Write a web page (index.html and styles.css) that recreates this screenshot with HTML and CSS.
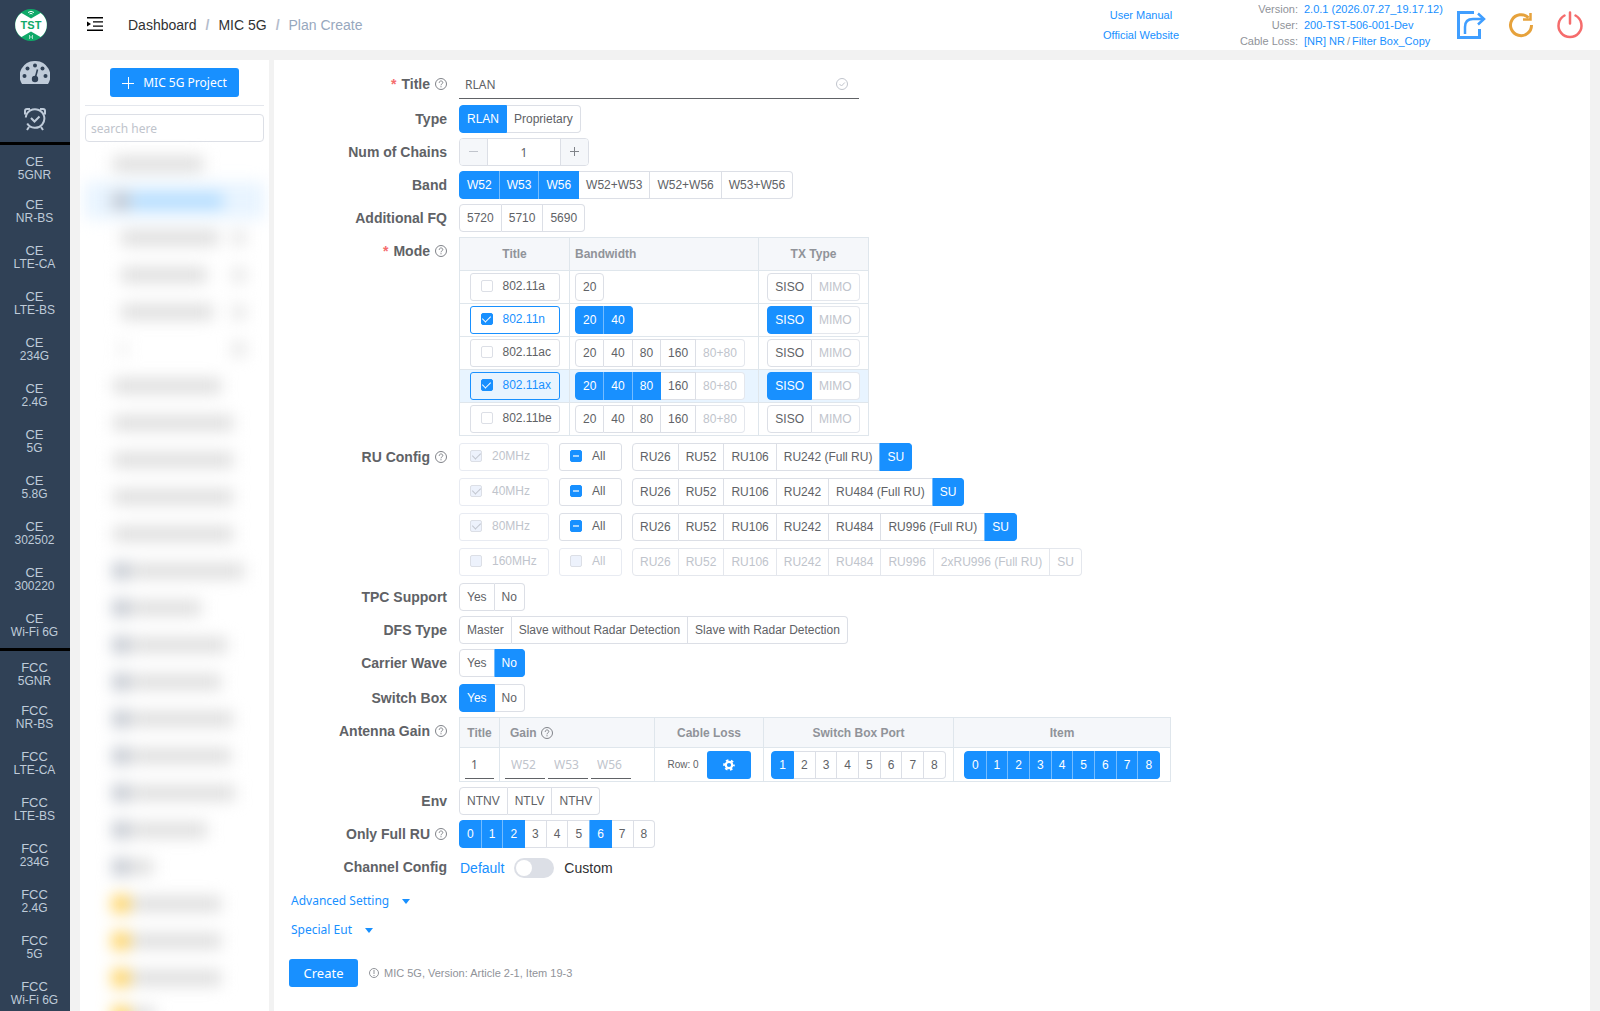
FILE: index.html
```html
<!DOCTYPE html>
<html lang="en">
<head>
  <meta charset="UTF-8" />
  <meta name="viewport" content="width=device-width, initial-scale=1.0" />
  <title>MIC 5G - Plan Create</title>
  <link rel="stylesheet" href="styles.css">
</head>
<body>
  <!-- shared icons -->
  <svg class="sprite" aria-hidden="true">
    <symbol id="question" viewBox="0 0 12 12">
      <circle cx="6" cy="6" r="5.500" fill="none" />
      <path d="M4.200 4.800C4.200 2.400 7.800 2.400 7.800 4.600C7.800 5.800 6 5.800 6 7.300M6 8.200V9.300" fill="none" />
    </symbol>
  </svg>

  <nav class="sidebar">
    <div class="sidebar-top">
      <a href="#" class="logo" aria-label="TST">
        <svg viewBox="0 0 32 32" width="32" height="32">
          <circle cx="16" cy="16" r="16" fill="#0fa968" />
          <path d="M1 11Q3 6 6.500 4L16 9.500L25.500 4Q29 6 31 11A16 16 0 0 1 31 21Q29 26 25.500 28L16 22.500L6.500 28Q3 26 1 21A16 16 0 0 1 1 11Z" fill="#fff" />
          <path d="M13 3.500q3-2.500 6 0M14.500 5q1.500-1.200 3 0" fill="none" stroke="#fff" />
          <path d="M14.500 26v4M17.500 26v4M14 28h4" stroke="#a5dfc5" />
          <text x="16" y="20" text-anchor="middle" font-size="11" font-weight="700" font-family="Liberation Sans, sans-serif" fill="#0fa968">TST</text>
        </svg>
      </a>
      <a href="#" class="side-icon" aria-label="Dashboard">
        <svg viewBox="0 0 30 23" width="30" height="23">
          <path d="M15 0A15 15 0 0 0 2 23H28A15 15 0 0 0 15 0Z" fill="#bfcbd9" />
          <g fill="#304156">
            <circle cx="4.500" cy="15" r="2" /><circle cx="7.500" cy="7.500" r="2" /><circle cx="15" cy="4.500" r="2" />
            <circle cx="22.500" cy="7.500" r="2" /><circle cx="25.500" cy="15" r="2" /><circle cx="15" cy="18" r="3.200" />
          </g>
          <path d="M15 18L17.500 8.500" stroke="#304156" stroke-width="1.600" />
        </svg>
      </a>
      <a href="#" class="side-icon" aria-label="Schedule">
        <svg viewBox="0 0 24 24" width="24" height="24" fill="none" stroke="#bfcbd9" stroke-width="2">
          <path d="M2.800 10.500A9.300 9.300 0 1 1 4.200 16.500" />
          <path d="M2 7.500V4Q2 2 4 2H7M22 7.500V4Q22 2 20 2H17M8 11l3.500 3.500 5-5M6 20l-2 3M18 20l2 3" />
        </svg>
      </a>
    </div>
    <ul class="side-list">
      <li><a href="#">CE<small>5GNR</small></a></li>
      <li><a href="#">CE<small>NR-BS</small></a></li>
      <li><a href="#">CE<small>LTE-CA</small></a></li>
      <li><a href="#">CE<small>LTE-BS</small></a></li>
      <li><a href="#">CE<small>234G</small></a></li>
      <li><a href="#">CE<small>2.4G</small></a></li>
      <li><a href="#">CE<small>5G</small></a></li>
      <li><a href="#">CE<small>5.8G</small></a></li>
      <li><a href="#">CE<small>302502</small></a></li>
      <li><a href="#">CE<small>300220</small></a></li>
      <li><a href="#">CE<small>Wi-Fi 6G</small></a></li>
    </ul>
    <ul class="side-list">
      <li><a href="#">FCC<small>5GNR</small></a></li>
      <li><a href="#">FCC<small>NR-BS</small></a></li>
      <li><a href="#">FCC<small>LTE-CA</small></a></li>
      <li><a href="#">FCC<small>LTE-BS</small></a></li>
      <li><a href="#">FCC<small>234G</small></a></li>
      <li><a href="#">FCC<small>2.4G</small></a></li>
      <li><a href="#">FCC<small>5G</small></a></li>
      <li><a href="#">FCC<small>Wi-Fi 6G</small></a></li>
    </ul>
  </nav>

  <div class="main">
    <header class="navbar">
      <button type="button" class="icon-btn fold" aria-label="Toggle menu">
        <svg viewBox="0 0 16 14" width="16" height="14" stroke="#000" stroke-width="1.400">
          <path d="M0 .7H16M6 4.900H16M6 9.100H16M0 13.300H16" />
          <path d="M0 4.500L4 7L0 9.500Z" fill="#000" stroke="none" />
        </svg>
      </button>
      <nav class="breadcrumb">
        <a href="#">Dashboard</a><b>/</b><a href="#">MIC 5G</a><b>/</b><span>Plan Create</span>
      </nav>
      <div class="navbar-links">
        <a href="#">User Manual</a>
        <a href="#">Official Website</a>
      </div>
      <dl class="navbar-info">
        <dt>Version:</dt><dd><a href="#">2.0.1 (2026.07.27_19.17.12)</a></dd>
        <dt>User:</dt><dd><a href="#">200-TST-506-001-Dev</a></dd>
        <dt>Cable Loss:</dt><dd class="path"><a href="#">[NR] NR</a><span>/</span><a href="#">Filter Box_Copy</a></dd>
      </dl>
      <div class="navbar-actions">
        <button type="button" class="icon-btn" aria-label="Export">
          <svg viewBox="0 0 30 30" width="30" height="30" fill="none" stroke="#409eff" stroke-width="3">
            <path d="M18 2.500H2.500V27.500H23.500V19" />
            <path d="M9 24V17Q9 9 17 9H27" stroke-width="2.500" />
            <path d="M22 3.500L28 9L22 14.500" stroke-width="2.500" />
          </svg>
        </button>
        <button type="button" class="icon-btn" aria-label="Refresh">
          <svg viewBox="0 0 26 26" width="26" height="26" fill="none" stroke="#e6a23c" stroke-width="3">
            <path d="M20.500 5.800A10.500 10.500 0 1 0 23.500 13" />
            <path d="M22.500 1V7.500H15" stroke-width="2.500" />
          </svg>
        </button>
        <button type="button" class="icon-btn" aria-label="Log out">
          <svg viewBox="0 0 28 28" width="28" height="28" fill="none" stroke="#f56c6c" stroke-width="2.500" stroke-linecap="round">
            <path d="M8.500 4.500A11.500 11.500 0 1 0 19.500 4.500M14 1.500V12.500" />
          </svg>
        </button>
      </div>
    </header>

    <div class="content">
      <aside class="project-panel">
        <div class="project-head">
          <button type="button" class="btn btn-project">
            <svg viewBox="0 0 12 12" width="12" height="12" stroke="#fff"><path d="M0 6.500H12M6.500 0V12" /></svg>
            MIC 5G Project
          </button>
        </div>
        <input type="text" class="search" placeholder="search here" aria-label="search here">
        <div class="tree" aria-hidden="true">
          <div class="node"><i style="width: 90px"></i></div>
          <div class="node active"><em></em><i style="width: 92px"></i></div>
          <div class="node sub"><i style="width: 98px"></i><u></u></div>
          <div class="node sub"><i style="width: 86px"></i><u></u></div>
          <div class="node sub"><i style="width: 92px"></i><u></u></div>
          <div class="node sub"><i style="width: 4px"></i><u></u></div>
          <div class="node"><i style="width: 108px"></i></div>
          <div class="node"><i style="width: 120px"></i></div>
          <div class="node"><i style="width: 120px"></i></div>
          <div class="node"><i style="width: 120px"></i></div>
          <div class="node"><i style="width: 120px"></i></div>
          <div class="node"><em></em><i style="width: 114px"></i></div>
          <div class="node"><em></em><i style="width: 70px"></i></div>
          <div class="node"><em></em><i style="width: 96px"></i></div>
          <div class="node"><em></em><i style="width: 90px"></i></div>
          <div class="node"><em></em><i style="width: 102px"></i></div>
          <div class="node"><em></em><i style="width: 100px"></i></div>
          <div class="node"><em></em><i style="width: 104px"></i></div>
          <div class="node"><em></em><i style="width: 76px"></i></div>
          <div class="node"><em></em><i style="width: 22px"></i></div>
          <div class="node folder"><em></em><i style="width: 90px"></i></div>
          <div class="node folder"><em></em><i style="width: 90px"></i></div>
          <div class="node folder"><em></em><i style="width: 90px"></i></div>
          <div class="node folder"><em></em><i style="width: 24px"></i></div>
        </div>
      </aside>

      <form class="plan-form">
        <div class="item">
          <label class="item-label required" for="title">Title <svg class="help"><use href="#question" /></svg></label>
          <div class="title-box">
            <input type="text" id="title" class="line-input" value="RLAN">
            <svg viewBox="0 0 12 12" width="12" height="12" fill="none" stroke="#c0c4cc"><circle cx="6" cy="6" r="5.500" /><path d="M3.500 6l2 2 3.300-3.500" /></svg>
          </div>
        </div>

        <div class="item">
          <span class="item-label" id="l-type">Type</span>
          <div class="seg" role="group" aria-labelledby="l-type">
            <label><input type="radio" name="type" checked><span>RLAN</span></label>
            <label><input type="radio" name="type"><span>Proprietary</span></label>
          </div>
        </div>

        <div class="item">
          <label class="item-label" for="chains">Num of Chains</label>
          <div class="stepper">
            <button type="button" disabled aria-label="Decrease"><svg viewBox="0 0 9 9" width="9" height="9"><path d="M0 4.500H9" /></svg></button>
            <input type="text" id="chains" value="1">
            <button type="button" aria-label="Increase"><svg viewBox="0 0 9 9" width="9" height="9"><path d="M0 4.500H9M4.500 0V9" /></svg></button>
          </div>
        </div>

        <div class="item">
          <span class="item-label" id="l-band">Band</span>
          <div class="seg" role="group" aria-labelledby="l-band">
            <label><input type="checkbox" checked><span>W52</span></label>
            <label><input type="checkbox" checked><span>W53</span></label>
            <label><input type="checkbox" checked><span>W56</span></label>
            <label><input type="checkbox"><span>W52+W53</span></label>
            <label><input type="checkbox"><span>W52+W56</span></label>
            <label><input type="checkbox"><span>W53+W56</span></label>
          </div>
        </div>

        <div class="item">
          <span class="item-label" id="l-fq">Additional FQ</span>
          <div class="seg" role="group" aria-labelledby="l-fq">
            <label><input type="checkbox"><span>5720</span></label>
            <label><input type="checkbox"><span>5710</span></label>
            <label><input type="checkbox"><span>5690</span></label>
          </div>
        </div>

        <div class="item loose">
          <span class="item-label required">Mode <svg class="help"><use href="#question" /></svg></span>
          <table class="grid mode-table">
            <thead>
              <tr><th>Title</th><th class="left">Bandwidth</th><th>TX Type</th></tr>
            </thead>
            <tbody>
              <tr>
                <td><label class="check"><input type="checkbox">802.11a</label></td>
                <td class="left"><div class="seg">
                  <label><input type="checkbox"><span>20</span></label>
                </div></td>
                <td><div class="seg">
                  <label><input type="checkbox"><span>SISO</span></label>
                  <label><input type="checkbox" disabled><span>MIMO</span></label>
                </div></td>
              </tr>
              <tr>
                <td><label class="check on"><input type="checkbox" checked>802.11n</label></td>
                <td class="left"><div class="seg">
                  <label><input type="checkbox" checked><span>20</span></label>
                  <label><input type="checkbox" checked><span>40</span></label>
                </div></td>
                <td><div class="seg">
                  <label><input type="checkbox" checked><span>SISO</span></label>
                  <label><input type="checkbox" disabled><span>MIMO</span></label>
                </div></td>
              </tr>
              <tr>
                <td><label class="check"><input type="checkbox">802.11ac</label></td>
                <td class="left"><div class="seg">
                  <label><input type="checkbox"><span>20</span></label>
                  <label><input type="checkbox"><span>40</span></label>
                  <label><input type="checkbox"><span>80</span></label>
                  <label><input type="checkbox"><span>160</span></label>
                  <label><input type="checkbox" disabled><span>80+80</span></label>
                </div></td>
                <td><div class="seg">
                  <label><input type="checkbox"><span>SISO</span></label>
                  <label><input type="checkbox" disabled><span>MIMO</span></label>
                </div></td>
              </tr>
              <tr class="hover">
                <td><label class="check on"><input type="checkbox" checked>802.11ax</label></td>
                <td class="left"><div class="seg">
                  <label><input type="checkbox" checked><span>20</span></label>
                  <label><input type="checkbox" checked><span>40</span></label>
                  <label><input type="checkbox" checked><span>80</span></label>
                  <label><input type="checkbox"><span>160</span></label>
                  <label><input type="checkbox" disabled><span>80+80</span></label>
                </div></td>
                <td><div class="seg">
                  <label><input type="checkbox" checked><span>SISO</span></label>
                  <label><input type="checkbox" disabled><span>MIMO</span></label>
                </div></td>
              </tr>
              <tr>
                <td><label class="check"><input type="checkbox">802.11be</label></td>
                <td class="left"><div class="seg">
                  <label><input type="checkbox"><span>20</span></label>
                  <label><input type="checkbox"><span>40</span></label>
                  <label><input type="checkbox"><span>80</span></label>
                  <label><input type="checkbox"><span>160</span></label>
                  <label><input type="checkbox" disabled><span>80+80</span></label>
                </div></td>
                <td><div class="seg">
                  <label><input type="checkbox"><span>SISO</span></label>
                  <label><input type="checkbox" disabled><span>MIMO</span></label>
                </div></td>
              </tr>
            </tbody>
          </table>
        </div>

        <div class="item loose">
          <span class="item-label">RU Config <svg class="help"><use href="#question" /></svg></span>
          <div class="ru-rows">
            <div class="ru-row">
              <label class="check off"><input type="checkbox" checked disabled>20MHz</label>
              <label class="check all"><input type="checkbox" class="partial">All</label>
              <div class="seg">
                <label><input type="checkbox"><span>RU26</span></label>
                <label><input type="checkbox"><span>RU52</span></label>
                <label><input type="checkbox"><span>RU106</span></label>
                <label><input type="checkbox"><span>RU242 (Full RU)</span></label>
                <label><input type="checkbox" checked><span>SU</span></label>
              </div>
            </div>
            <div class="ru-row">
              <label class="check off"><input type="checkbox" checked disabled>40MHz</label>
              <label class="check all"><input type="checkbox" class="partial">All</label>
              <div class="seg">
                <label><input type="checkbox"><span>RU26</span></label>
                <label><input type="checkbox"><span>RU52</span></label>
                <label><input type="checkbox"><span>RU106</span></label>
                <label><input type="checkbox"><span>RU242</span></label>
                <label><input type="checkbox"><span>RU484 (Full RU)</span></label>
                <label><input type="checkbox" checked><span>SU</span></label>
              </div>
            </div>
            <div class="ru-row">
              <label class="check off"><input type="checkbox" checked disabled>80MHz</label>
              <label class="check all"><input type="checkbox" class="partial">All</label>
              <div class="seg">
                <label><input type="checkbox"><span>RU26</span></label>
                <label><input type="checkbox"><span>RU52</span></label>
                <label><input type="checkbox"><span>RU106</span></label>
                <label><input type="checkbox"><span>RU242</span></label>
                <label><input type="checkbox"><span>RU484</span></label>
                <label><input type="checkbox"><span>RU996 (Full RU)</span></label>
                <label><input type="checkbox" checked><span>SU</span></label>
              </div>
            </div>
            <div class="ru-row">
              <label class="check off"><input type="checkbox" disabled>160MHz</label>
              <label class="check all off"><input type="checkbox" disabled>All</label>
              <div class="seg">
                <label><input type="checkbox" disabled><span>RU26</span></label>
                <label><input type="checkbox" disabled><span>RU52</span></label>
                <label><input type="checkbox" disabled><span>RU106</span></label>
                <label><input type="checkbox" disabled><span>RU242</span></label>
                <label><input type="checkbox" disabled><span>RU484</span></label>
                <label><input type="checkbox" disabled><span>RU996</span></label>
                <label><input type="checkbox" disabled><span>2xRU996 (Full RU)</span></label>
                <label><input type="checkbox" disabled><span>SU</span></label>
              </div>
            </div>
          </div>
        </div>

        <div class="item">
          <span class="item-label" id="l-tpc">TPC Support</span>
          <div class="seg" role="group" aria-labelledby="l-tpc">
            <label><input type="radio" name="tpc"><span>Yes</span></label>
            <label><input type="radio" name="tpc"><span>No</span></label>
          </div>
        </div>

        <div class="item">
          <span class="item-label" id="l-dfs">DFS Type</span>
          <div class="seg" role="group" aria-labelledby="l-dfs">
            <label><input type="radio" name="dfs"><span>Master</span></label>
            <label><input type="radio" name="dfs"><span>Slave without Radar Detection</span></label>
            <label><input type="radio" name="dfs"><span>Slave with Radar Detection</span></label>
          </div>
        </div>

        <div class="item loose">
          <span class="item-label" id="l-cw">Carrier Wave</span>
          <div class="seg" role="group" aria-labelledby="l-cw">
            <label><input type="radio" name="cw"><span>Yes</span></label>
            <label><input type="radio" name="cw" checked><span>No</span></label>
          </div>
        </div>

        <div class="item">
          <span class="item-label" id="l-sb">Switch Box</span>
          <div class="seg" role="group" aria-labelledby="l-sb">
            <label><input type="radio" name="sb" checked><span>Yes</span></label>
            <label><input type="radio" name="sb"><span>No</span></label>
          </div>
        </div>

        <div class="item">
          <span class="item-label">Antenna Gain <svg class="help"><use href="#question" /></svg></span>
          <table class="grid gain-table">
            <thead>
              <tr>
                <th>Title</th>
                <th class="left">Gain <svg class="help"><use href="#question" /></svg></th>
                <th>Cable Loss</th>
                <th>Switch Box Port</th>
                <th>Item</th>
              </tr>
            </thead>
            <tbody>
              <tr>
                <td><input type="text" class="line-input" value="1" aria-label="Title"></td>
                <td class="left">
                  <div class="gains">
                    <input type="text" class="line-input" placeholder="W52" aria-label="W52">
                    <input type="text" class="line-input" placeholder="W53" aria-label="W53">
                    <input type="text" class="line-input" placeholder="W56" aria-label="W56">
                  </div>
                </td>
                <td>
                  <div class="loss">
                    Row: 0
                    <button type="button" class="btn btn-gear" aria-label="Cable loss setting">
                      <svg viewBox="0 0 12 12" width="12" height="12" fill="none" stroke="#fff">
                        <circle cx="6" cy="6" r="3.200" stroke-width="2.200" />
                        <circle cx="6" cy="6" r="4.800" stroke-width="2" stroke-dasharray="2.500 2.530" stroke-dashoffset="1.200" />
                      </svg>
                    </button>
                  </div>
                </td>
                <td><div class="seg">
                  <label><input type="radio" name="port" checked><span>1</span></label>
                  <label><input type="radio" name="port"><span>2</span></label>
                  <label><input type="radio" name="port"><span>3</span></label>
                  <label><input type="radio" name="port"><span>4</span></label>
                  <label><input type="radio" name="port"><span>5</span></label>
                  <label><input type="radio" name="port"><span>6</span></label>
                  <label><input type="radio" name="port"><span>7</span></label>
                  <label><input type="radio" name="port"><span>8</span></label>
                </div></td>
                <td><div class="seg">
                  <label><input type="checkbox" checked><span>0</span></label>
                  <label><input type="checkbox" checked><span>1</span></label>
                  <label><input type="checkbox" checked><span>2</span></label>
                  <label><input type="checkbox" checked><span>3</span></label>
                  <label><input type="checkbox" checked><span>4</span></label>
                  <label><input type="checkbox" checked><span>5</span></label>
                  <label><input type="checkbox" checked><span>6</span></label>
                  <label><input type="checkbox" checked><span>7</span></label>
                  <label><input type="checkbox" checked><span>8</span></label>
                </div></td>
              </tr>
            </tbody>
          </table>
        </div>

        <div class="item">
          <span class="item-label" id="l-env">Env</span>
          <div class="seg" role="group" aria-labelledby="l-env">
            <label><input type="checkbox"><span>NTNV</span></label>
            <label><input type="checkbox"><span>NTLV</span></label>
            <label><input type="checkbox"><span>NTHV</span></label>
          </div>
        </div>

        <div class="item">
          <span class="item-label" id="l-full">Only Full RU <svg class="help"><use href="#question" /></svg></span>
          <div class="seg" role="group" aria-labelledby="l-full">
            <label><input type="checkbox" checked><span>0</span></label>
            <label><input type="checkbox" checked><span>1</span></label>
            <label><input type="checkbox" checked><span>2</span></label>
            <label><input type="checkbox"><span>3</span></label>
            <label><input type="checkbox"><span>4</span></label>
            <label><input type="checkbox"><span>5</span></label>
            <label><input type="checkbox" checked><span>6</span></label>
            <label><input type="checkbox"><span>7</span></label>
            <label><input type="checkbox"><span>8</span></label>
          </div>
        </div>

        <div class="item">
          <label class="item-label" for="channel">Channel Config</label>
          <div class="switch">
            <span class="current">Default</span>
            <input type="checkbox" id="channel" role="switch">
            <span>Custom</span>
          </div>
        </div>

        <button type="button" class="more">Advanced Setting</button>
        <button type="button" class="more">Special Eut</button>

        <div class="submit">
          <button type="button" class="btn btn-create">Create</button>
          <svg viewBox="0 0 10 10" width="10" height="10" fill="none" stroke="#909399"><circle cx="5" cy="5" r="4.500" /><path d="M5 2V6M5 7V8" /></svg>
          <span>MIC 5G, Version: Article 2-1, Item 19-3</span>
        </div>
      </form>
    </div>
  </div>
</body>
</html>
```
FILE: styles.css
```css
* { margin: 0; padding: 0; box-sizing: border-box; }

body {
  display: flex;
  height: 100vh;
  overflow: hidden;
  font-family: Arial, "Liberation Sans", sans-serif;
  font-size: 12px;
  color: #606266;
  background: #f2f2f2;
}

a { color: #1890ff; text-decoration: none; }
ul { list-style: none; }
button, input { font-family: inherit; font-size: inherit; color: inherit; }
button { cursor: pointer; }

.sprite { display: none; }

/* sidebar */
.sidebar {
  width: 70px;
  flex: none;
  background: #304156;
  overflow: hidden;
}

.sidebar-top {
  display: flex;
  flex-direction: column;
  align-items: center;
  height: 142px;
  padding-top: 9px;
}

.logo { height: 32px; margin: 0 8px 20px 0; }
.side-icon { height: 23px; }
.side-icon + .side-icon { margin-top: 23px; }

.side-list { border-top: 3px solid #000; }

.side-list a {
  display: block;
  height: 46px;
  padding: 10px 1px 0 0;
  font-size: 13px;
  line-height: 14px;
  text-align: center;
  color: #bfcbd9;
}

.side-list li:first-child a { height: 43px; }

.side-list small {
  display: block;
  font-size: 12px;
  line-height: 12px;
}

/* top bar */
.main {
  flex: 1;
  min-width: 0;
  display: flex;
  flex-direction: column;
}

.navbar {
  display: flex;
  align-items: center;
  flex: none;
  height: 50px;
  padding: 0 16px 0 17px;
  background: #fff;
}

.icon-btn {
  display: flex;
  border: 0;
  background: none;
}

.fold { margin-bottom: 2px; }

.breadcrumb {
  flex: 1;
  margin-left: 25px;
  font-size: 14px;
  color: #97a8be;
}

.breadcrumb a { color: #303133; }
.breadcrumb b { margin: 0 9px; color: #b4bccc; }

.navbar-links {
  display: flex;
  flex-direction: column;
  gap: 4px;
  width: 76px;
  font-size: 11px;
  line-height: 16px;
  text-align: center;
  white-space: nowrap;
}

.navbar-info {
  display: grid;
  grid-template-columns: 119px 140px;
  column-gap: 6px;
  font-size: 11px;
  line-height: 16px;
  color: #909399;
  white-space: nowrap;
}

.navbar-info dt { text-align: right; }
.navbar-info .path span { margin: 0 2px; }

.navbar-actions {
  display: flex;
  align-items: center;
  gap: 22px;
  margin-left: 12px;
}

/* projects */
.content {
  flex: 1;
  min-height: 0;
  display: flex;
  gap: 5px;
  padding: 10px 10px 0;
}

.project-panel {
  width: 189px;
  flex: none;
  padding: 0 5px;
  background: #fff;
  overflow: hidden;
}

.btn {
  display: flex;
  align-items: center;
  justify-content: center;
  height: 28px;
  border: 0;
  border-radius: 3px;
  font-family: "Noto Sans", sans-serif;
  font-size: 12px;
  color: #fff;
  background: #1890ff;
}

.project-head {
  display: flex;
  justify-content: center;
  height: 46px;
  padding-top: 8px;
  border-bottom: 1px solid #e4e7ed;
}

.btn-project { width: 129px; height: 29px; gap: 9px; }

.search {
  width: 100%;
  height: 28px;
  margin-top: 8px;
  padding: 0 5px;
  border: 1px solid #dcdfe6;
  border-radius: 4px;
  font-family: "Noto Sans", sans-serif;
}

::placeholder { color: #c0c4cc; opacity: 1; }

.tree { padding-top: 3px; filter: blur(8px); }

.node {
  display: flex;
  align-items: center;
  gap: 4px;
  height: 37px;
  padding: 0 20px 0 28px;
}

.node.sub { padding-left: 36px; }
.node.active { background: #e8f4ff; }
.node i { height: 14px; background: #dadada; }
.node em { width: 16px; height: 16px; margin-right: -2px; background: #b8bec8; }
.node u { width: 10px; height: 14px; margin-left: auto; background: #dadada; }
.node.active i { background: #addaff; }
.node.folder em { background: #ffc93c; }

/* form */
.plan-form {
  flex: 1;
  min-width: 0;
  padding: 10px 15px;
  background: #fff;
  overflow: hidden;
}

.item { display: flex; margin-bottom: 5px; }
.item.loose { margin-bottom: 7px; }

.item-label {
  display: flex;
  align-items: center;
  justify-content: flex-end;
  gap: 5px;
  flex: none;
  width: 170px;
  height: 28px;
  padding-right: 12px;
  font-size: 14px;
  font-weight: 700;
}

.item-label.required::before {
  content: "*";
  color: #f56c6c;
}

.help {
  width: 12px;
  height: 12px;
  stroke: #808389;
}

.line-input {
  width: 100%;
  height: 28px;
  padding: 0 6px;
  border: 0;
  border-bottom: 1px solid #606266;
  font-family: "Noto Sans", sans-serif;
  background: none;
  outline: none;
}

.title-box {
  display: flex;
  align-items: flex-start;
  width: 400px;
  height: 30px;
}

.title-box .line-input { height: 29px; }
.title-box svg { flex: none; margin: 8px 11px 0 -23px; }

/* button-like checkbox / radio groups */
.seg { display: inline-flex; vertical-align: top; }
.seg label { position: relative; cursor: pointer; }

.seg input {
  position: absolute;
  inset: 0;
  opacity: 0;
}

.seg span {
  display: block;
  height: 28px;
  padding: 0 7px;
  border: 1px solid #dcdfe6;
  border-left-width: 0;
  line-height: 26px;
  white-space: nowrap;
  background: #fff;
}

.seg label:first-child span { border-left-width: 1px; border-radius: 4px 0 0 4px; }
.seg label:last-child span { border-radius: 0 4px 4px 0; }
.seg label:only-child span { border-radius: 4px; }

.seg input:checked + span {
  color: #fff;
  background: #1890ff;
  border-color: #1890ff;
}

.seg label + label input:checked + span { box-shadow: -1px 0 0 #74bcff; }

.seg input:disabled + span {
  color: #c0c4cc;
  border-color: #e4e7ed;
}

.stepper {
  display: flex;
  width: 130px;
  height: 28px;
  border: 1px solid #dcdfe6;
  border-radius: 4px;
  overflow: hidden;
}

.stepper button {
  flex: none;
  width: 27px;
  border: 0;
  background: #f5f7fa;
  stroke: #808389;
}

.stepper button:disabled { stroke: #c0c4cc; }

.stepper input {
  flex: 1;
  min-width: 0;
  border: solid #dcdfe6;
  border-width: 0 1px;
  font-family: "Noto Sans", sans-serif;
  text-align: center;
}

.check {
  display: inline-flex;
  align-items: center;
  gap: 10px;
  width: 90px;
  height: 28px;
  padding: 0 10px 2px;
  border: 1px solid #dcdfe6;
  border-radius: 3px;
  vertical-align: top;
  white-space: nowrap;
}

.check.all { width: 63px; }
.check.on { color: #1890ff; border-color: #1890ff; }
.check.off { color: #c0c4cc; border-color: #e8ebf2; }

.check input {
  appearance: none;
  display: flex;
  justify-content: center;
  flex: none;
  width: 12px;
  height: 12px;
  border: 1px solid #dcdfe6;
  border-radius: 2px;
  background: #fff;
}

.check input:checked, .check .partial {
  border-color: #1890ff;
  background: #1890ff;
}

.check input:checked::after {
  content: "";
  width: 4px;
  height: 7px;
  border: solid #fff;
  border-width: 0 1px 1px 0;
  transform: rotate(45deg);
}

.check .partial::after {
  content: "";
  width: 6px;
  height: 2px;
  margin-top: 4px;
  background: #a3d3ff;
}

.check input:disabled { border-color: #dcdfe6; background: #edf2fc; }
.check input:disabled::after { border-color: #c0c4cc; }

/* tables */
.grid {
  border-collapse: collapse;
  table-layout: fixed;
}

.grid th, .grid td {
  border: 1px solid #dfe6ec;
  text-align: center;
  vertical-align: middle;
}

.grid th { color: #909399; background: #f5f7fa; }
.grid .left { text-align: left; padding-left: 5px; }
.grid .hover td { background: #e8f4ff; }

.mode-table { width: 410px; }
.mode-table tr { height: 33px; }
.mode-table th:nth-child(1) { width: 110px; }
.mode-table th:nth-child(3) { width: 110px; }

.gain-table { width: 712px; }
.gain-table thead tr { height: 30px; }
.gain-table tbody tr { height: 34px; }
.gain-table th:nth-child(1) { width: 40px; }
.gain-table th:nth-child(2) { width: 155px; }
.gain-table th:nth-child(3) { width: 109px; }
.gain-table th:nth-child(4) { width: 190px; }
.gain-table th.left { padding-left: 10px; }
.gain-table th .help { margin-left: 1px; vertical-align: -2px; }
.gain-table td > .line-input { width: 29px; }

.gains { display: flex; gap: 3px; }
.gains .line-input { width: 40px; }

.loss {
  display: flex;
  align-items: center;
  justify-content: center;
  gap: 8px;
  font-size: 10px;
}

.btn-gear { width: 44px; }

.ru-rows { display: grid; gap: 7px; }
.ru-row { display: flex; gap: 10px; }

.switch {
  display: flex;
  align-items: center;
  gap: 10px;
  height: 30px;
  padding-left: 1px;
  font-size: 14px;
  color: #303133;
}

.switch .current { color: #1890ff; }

.switch input {
  appearance: none;
  width: 40px;
  height: 20px;
  padding: 2px;
  border-radius: 10px;
  background: #dcdfe6;
}

.switch input::before {
  content: "";
  display: block;
  width: 16px;
  height: 16px;
  border-radius: 50%;
  background: #fff;
}

.more {
  display: flex;
  align-items: center;
  gap: 13px;
  height: 29px;
  margin-left: 2px;
  border: 0;
  font-family: "Noto Sans", sans-serif;
  line-height: 26px;
  padding-bottom: 3px;
  color: #1890ff;
  background: none;
}

.more::after {
  content: "";
  border: 4px solid transparent;
  border-top: 5px solid #1890ff;
  border-bottom: 0;
}

.submit {
  display: flex;
  align-items: center;
  margin-top: 13px;
  font-size: 11px;
  color: #909399;
}

.btn-create { width: 69px; font-size: 13px; }
.submit svg { margin: 0 5px 0 11px; }
```
